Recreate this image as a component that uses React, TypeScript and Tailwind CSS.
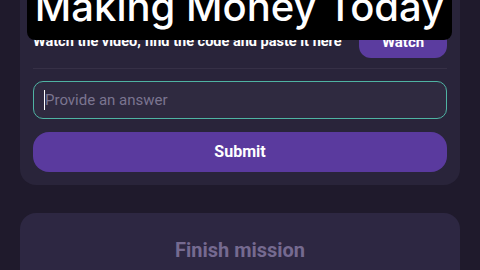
import React from 'react';

export default function App() {
  return (
    <div className="relative h-[270px] w-[480px] overflow-hidden bg-[#1f1a2c] font-['Roboto',sans-serif]">
      <div className="flex flex-col gap-[28px] px-5 pt-0">
        {/* mission card */}
        <div className="-mt-5 rounded-2xl bg-[#29243a] px-[13px] pb-[13px] pt-[44px]">
          <div className="flex items-center justify-between">
            <p className="pt-[2px] text-[14.5px] font-bold leading-4 text-white">
              Watch the video, find the code and paste it here
            </p>
            <button className="flex h-[34px] w-[88px] items-center justify-center rounded-xl bg-[#5b3c9f] pt-[2px] text-[15px] font-bold text-white">
              Watch
            </button>
          </div>
          <div className="mt-[10px] h-px bg-[#363046]" />
          <div className="mt-3 flex h-[38px] items-center rounded-[10px] border-[1.5px] border-[#4fb3a3] bg-[#2f2a40] px-[10px]">
            <span className="h-[20px] w-px bg-white" />
            <span className="text-[15px] text-[#7b7590]">Provide an answer</span>
          </div>
          <button className="mt-[13px] flex h-10 w-full items-center justify-center rounded-2xl bg-[#5a3a9e] text-[16px] font-bold text-white">
            Submit
          </button>
        </div>

        {/* finish card */}
        <div className="flex h-[80px] items-start justify-center rounded-2xl bg-[#2d2742] pt-[22px]">
          <span className="text-[20px] font-bold text-[#756a90]">Finish mission</span>
        </div>
      </div>

      {/* caption overlay */}
      <div className="absolute left-[27px] top-0 flex h-[40px] w-[425px] items-start justify-center overflow-hidden rounded-b-lg bg-black">
        <span className="-mt-[13px] whitespace-nowrap font-['Inter',sans-serif] text-[40px] font-medium leading-[40px] text-white">
          Making Money Today
        </span>
      </div>
    </div>
  );
}
